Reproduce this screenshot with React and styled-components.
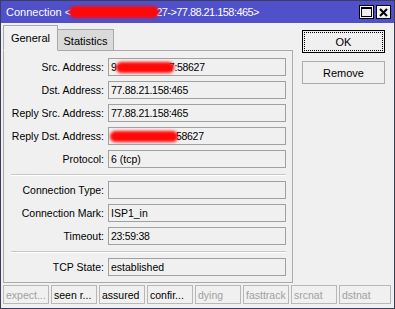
import React from "react";
import styled, { createGlobalStyle } from "styled-components";

const Global = createGlobalStyle`
  html, body { margin: 0; padding: 0; background: #f0f0f0; }
  body { font-family: "Liberation Sans", Arial, sans-serif; }
  * { box-sizing: border-box; }
`;

const Window = styled.div`
  width: 395px;
  height: 309px;
  background: #f0f0f0;
  border: 1px solid #3c3c5c;
  display: flex;
  flex-direction: column;
  font-family: "Liberation Sans", Arial, sans-serif;
  color: #000;
  overflow: hidden;
`;

const TitleBar = styled.div`
  height: 22px;
  flex: none;
  background: #5050cb;
  display: flex;
  align-items: center;
  padding: 0 3px 0 5px;
  color: #fff;
  font-size: 11px;
`;

const Title = styled.div`
  flex: 1;
  white-space: nowrap;
  display: flex;
  align-items: center;
`;

const Blob = styled.span`
  display: inline-block;
  width: ${(p) => p.$w}px;
  height: ${(p) => p.$h || 11}px;
  margin: 0 ${(p) => p.$mr || 0}px 0 ${(p) => p.$ml || 0}px;
  background: #ff0808;
  border-radius: 6px;
  filter: blur(1.8px);
  vertical-align: middle;
  position: relative;
  z-index: 1;
`;

const Digits = styled.span`
  letter-spacing: ${(p) => (p.$title ? "-0.55px" : "-0.3px")};
`;

const TitleButtons = styled.div`
  display: flex;
  gap: 2px;
`;

const TitleButton = styled.div`
  width: 15px;
  height: 14px;
  border: 1px solid #000;
  background: #f0f0f0;
  box-shadow: inset 1px 1px 0 #fff;
  display: flex;
  align-items: center;
  justify-content: center;
`;

const Body = styled.div`
  flex: 1;
  display: flex;
  padding: 2px 2px 0 2px;
  min-height: 0;
`;

const LeftCol = styled.div`
  width: 290px;
  display: flex;
  flex-direction: column;
`;

const TabBar = styled.div`
  display: flex;
  align-items: flex-end;
  height: 26px;
  margin-bottom: -1px;
  position: relative;
  z-index: 1;
`;

const Tab = styled.div`
  height: ${(p) => (p.$active ? 26 : 22)}px;
  width: ${(p) => p.$w}px;
  border: 1px solid #a9a9a9;
  border-bottom: ${(p) => (p.$active ? "1px solid #f0f0f0" : "1px solid #a9a9a9")};
  border-left: ${(p) => (p.$active ? "1px solid #a9a9a9" : "none")};
  background: ${(p) => (p.$active ? "#f0f0f0" : "#dadada")};
  font-size: 11px;
  display: flex;
  align-items: center;
  justify-content: center;
  padding-top: ${(p) => (p.$active ? 0 : 1)}px;
`;

const Panel = styled.div`
  height: 233px;
  border: 1px solid #a9a9a9;
  display: flex;
  flex-direction: column;
  padding: 7px 6px 6px 0;
`;

const Group = styled.div`
  display: grid;
  grid-template-columns: 100px 1fr;
  column-gap: 4px;
  row-gap: 5px;
  align-items: center;
`;

const Label = styled.div`
  text-align: right;
  font-size: 10.5px;
  white-space: nowrap;
`;

const Field = styled.div`
  height: 18px;
  border: 1px solid #a0a0a0;
  background: #f0f0f0;
  font-size: 10.5px;
  display: flex;
  align-items: center;
  padding-left: 2px;
  white-space: nowrap;
  overflow: hidden;
`;

const Separator = styled.div`
  height: 1px;
  background: #c8c8c8;
  margin: 6px 0 6px 7px;
  box-shadow: 0 1px 0 #fff;
`;

const RightCol = styled.div`
  flex: 1;
  display: flex;
  flex-direction: column;
  align-items: flex-start;
  padding: 5px 0 0 9px;
  gap: 8px;
`;

const Button = styled.div`
  width: 83px;
  height: 23px;
  border: 1px solid ${(p) => (p.$default ? "#000" : "#adadad")};
  background: #f0f0f0;
  font-size: 11px;
  display: flex;
  align-items: center;
  justify-content: center;
  position: relative;
  &::after {
    content: "";
    display: ${(p) => (p.$default ? "block" : "none")};
    position: absolute;
    inset: 1px;
    border: 1px dotted #000;
  }
`;

const StatusBar = styled.div`
  flex: none;
  display: flex;
  gap: 2px;
  padding: 3px 3px 4px 2px;
`;

const StatusBox = styled.div`
  width: ${(p) => (p.$last ? "auto" : "46px")};
  flex: ${(p) => (p.$last ? 1 : "none")};
  height: 19px;
  border: 1px solid #b8b8b8;
  font-size: 10.5px;
  color: ${(p) => (p.$on ? "#000" : "#a0a0a0")};
  display: flex;
  align-items: center;
  padding-left: 2px;
  white-space: nowrap;
  overflow: hidden;
`;

const rowsA = [
  ["Src. Address:", <><span>9</span><Blob $w={58} $ml={-1} $mr={-5} /><Digits>7:58627</Digits></>],
  ["Dst. Address:", <Digits>77.88.21.158:465</Digits>],
  ["Reply Src. Address:", <Digits>77.88.21.158:465</Digits>],
  ["Reply Dst. Address:", <><Blob $w={68} $ml={-1} $mr={-2} /><Digits>58627</Digits></>],
  ["Protocol:", "6 (tcp)"],
];
const rowsB = [
  ["Connection Type:", ""],
  ["Connection Mark:", "ISP1_in"],
  ["Timeout:", <Digits>23:59:38</Digits>],
];

const status = [
  ["expect...", false],
  ["seen r...", true],
  ["assured", true],
  ["confir...", true],
  ["dying", false],
  ["fasttrack", false],
  ["srcnat", false],
  ["dstnat", false],
];

function Rows({ rows }) {
  return (
    <Group>
      {rows.map(([l, v]) => (
        <React.Fragment key={l}>
          <Label>{l}</Label>
          <Field>{v}</Field>
        </React.Fragment>
      ))}
    </Group>
  );
}

export default function App() {
  return (
    <>
      <Global />
      <Window>
        <TitleBar>
          <Title>
            Connection &lt;<Blob $w={90} $h={12} $ml={-2} $mr={-3} />
            <Digits $title>27-&gt;77.88.21.158:465&gt;</Digits>
          </Title>
          <TitleButtons>
            <TitleButton>
              <svg width="11" height="10" viewBox="0 0 11 10">
                <rect x="0.5" y="0.5" width="10" height="9" fill="none" stroke="#000" />
                <rect x="0" y="0" width="11" height="2" fill="#000" />
              </svg>
            </TitleButton>
            <TitleButton>
              <svg width="9" height="9" viewBox="0 0 9 9">
                <path d="M1 1 L8 8 M8 1 L1 8" stroke="#000" strokeWidth="2" />
              </svg>
            </TitleButton>
          </TitleButtons>
        </TitleBar>
        <Body>
          <LeftCol>
            <TabBar>
              <Tab $active $w={55}>General</Tab>
              <Tab $w={56}>Statistics</Tab>
            </TabBar>
            <Panel>
              <Rows rows={rowsA} />
              <Separator />
              <Rows rows={rowsB} />
              <Separator />
              <Rows rows={[["TCP State:", "established"]]} />
            </Panel>
          </LeftCol>
          <RightCol>
            <Button $default>OK</Button>
            <Button>Remove</Button>
          </RightCol>
        </Body>
        <StatusBar>
          {status.map(([t, on], i) => (
            <StatusBox key={t} $on={on} $last={i === status.length - 1}>
              {t}
            </StatusBox>
          ))}
        </StatusBar>
      </Window>
    </>
  );
}
